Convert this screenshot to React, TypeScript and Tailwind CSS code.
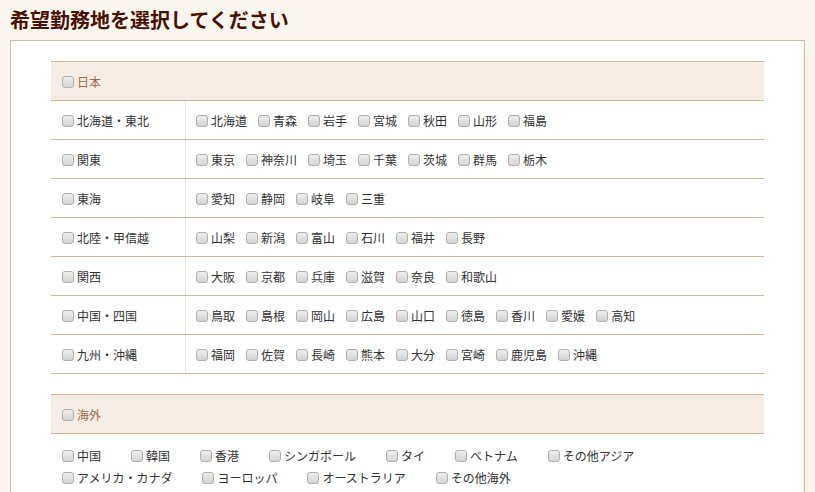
const regions = [
  { name: "北海道・東北", prefs: ["北海道", "青森", "岩手", "宮城", "秋田", "山形", "福島"] },
  { name: "関東", prefs: ["東京", "神奈川", "埼玉", "千葉", "茨城", "群馬", "栃木"] },
  { name: "東海", prefs: ["愛知", "静岡", "岐阜", "三重"] },
  { name: "北陸・甲信越", prefs: ["山梨", "新潟", "富山", "石川", "福井", "長野"] },
  { name: "関西", prefs: ["大阪", "京都", "兵庫", "滋賀", "奈良", "和歌山"] },
  { name: "中国・四国", prefs: ["鳥取", "島根", "岡山", "広島", "山口", "徳島", "香川", "愛媛", "高知"] },
  { name: "九州・沖縄", prefs: ["福岡", "佐賀", "長崎", "熊本", "大分", "宮崎", "鹿児島", "沖縄"] },
];

const overseas = [
  ["中国", "韓国", "香港", "シンガポール", "タイ", "ベトナム", "その他アジア"],
  ["アメリカ・カナダ", "ヨーロッパ", "オーストラリア", "その他海外"],
];

function Check({ label }: { label: string }) {
  return (
    <label className="flex items-center gap-[3px] whitespace-nowrap">
      <span className="inline-block w-[12px] h-[12px] shrink-0 rounded-[3px] border border-[#b0b0b0] bg-gradient-to-b from-[#eeeeee] to-[#d4d4d4]" />
      <span>{label}</span>
    </label>
  );
}

export default function App() {
  return (
    <div
      className="min-h-screen bg-[#faf6ef] text-[12px] text-[#333]"
      style={{ fontFamily: '"Noto Sans CJK JP", "Noto Sans", sans-serif' }}
    >
      <h1 className="h-[40px] pl-[10px] leading-[40px] text-[20px] font-bold text-[#4a1000]">
        希望勤務地を選択してください
      </h1>
      <div className="mx-[10px] border border-[#d6bb9b] bg-white px-[40px] pt-[20px] pb-[40px]">
        <div className="border-t border-b border-[#d3b797] bg-[#f4ece5] h-[40px] flex items-center pt-[2px] pl-[11px] text-[#9c6a4c]">
          <Check label="日本" />
        </div>
        {regions.map((r) => (
          <div key={r.name} className="flex h-[39px] border-b border-[#d3b797]">
            <div className="w-[135px] flex items-center pt-[2px] pl-[11px] border-r border-[#efe6db]">
              <Check label={r.name} />
            </div>
            <div className="flex items-center gap-[11px] pt-[2px] pl-[10px]">
              {r.prefs.map((p) => (
                <Check key={p} label={p} />
              ))}
            </div>
          </div>
        ))}

        <div className="mt-[20px] border-t border-b border-[#d3b797] bg-[#f4ece5] h-[40px] flex items-center pt-[2px] pl-[11px] text-[#9c6a4c]">
          <Check label="海外" />
        </div>
        <div className="flex flex-col pt-[10px] pl-[11px]">
          {overseas.map((row, i) => (
            <div key={i} className="flex h-[22px] items-center gap-[30px] pt-[2px]">
              {row.map((c) => (
                <Check key={c} label={c} />
              ))}
            </div>
          ))}
        </div>
      </div>
    </div>
  );
}
